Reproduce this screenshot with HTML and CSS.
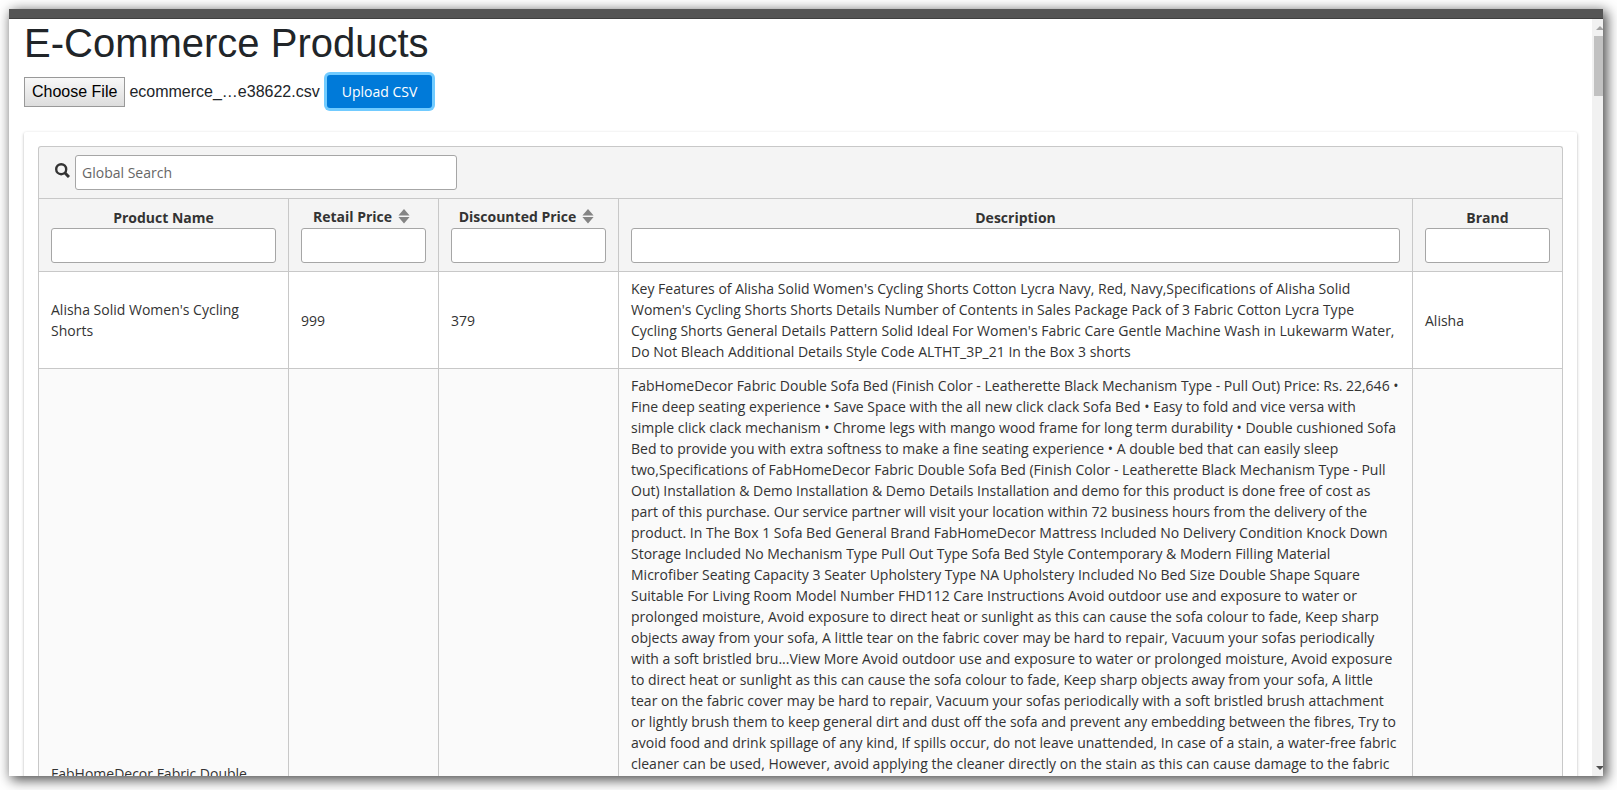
FILE: index.html
```html
<!DOCTYPE html>
<html lang="en">
<head>
<meta charset="utf-8">
<title>E-Commerce Products</title>
<link rel="stylesheet" href="styles.css">
</head>
<body>
<div class="window">
  <div class="topbar"></div>
  <div class="viewport">
    <main class="page">
      <h1 class="title">E-Commerce Products</h1>
      <form class="upload">
        <input class="file-input" type="file" id="csv" accept=".csv">
        <label class="file-button" for="csv">Choose File</label>
        <span class="file-name">ecommerce_…e38622.csv</span>
        <button class="upload-button" type="button">Upload CSV</button>
      </form>
      <section class="card">
        <div class="search">
          <label class="search-icon" for="global" aria-label="Global Search">
            <svg width="15" height="15" viewBox="0 0 15 15" fill="none" stroke="#333" stroke-width="2.4"><circle cx="6.2" cy="6.2" r="5"/><path d="M9.8 9.8L14 14" stroke-width="3"/></svg>
          </label>
          <input class="field search-field" id="global" type="text" placeholder="Global Search">
        </div>
        <table class="table">
          <colgroup><col class="col-name"><col class="col-retail"><col class="col-discount"><col><col class="col-brand"></colgroup>
          <thead>
            <tr>
              <th><label class="head" for="f-name">Product Name</label><input class="field" id="f-name" type="text"></th>
              <th><label class="head head-sort" for="f-retail">Retail Price<svg width="12" height="15" viewBox="0 0 12 15" fill="#848484"><path d="M6 0l5.6 6.6H.4zM6 14.6L.4 8h11.2z"/></svg></label><input class="field" id="f-retail" type="text"></th>
              <th><label class="head head-sort" for="f-disc">Discounted Price<svg width="12" height="15" viewBox="0 0 12 15" fill="#848484"><path d="M6 0l5.6 6.6H.4zM6 14.6L.4 8h11.2z"/></svg></label><input class="field" id="f-disc" type="text"></th>
              <th><label class="head" for="f-desc">Description</label><input class="field" id="f-desc" type="text"></th>
              <th><label class="head" for="f-brand">Brand</label><input class="field" id="f-brand" type="text"></th>
            </tr>
          </thead>
          <tbody>
            <tr>
              <td>Alisha Solid Women's Cycling Shorts</td>
              <td>999</td>
              <td>379</td>
              <td>Key Features of Alisha Solid Women's Cycling Shorts Cotton Lycra Navy, Red, Navy,Specifications of Alisha Solid Women's Cycling Shorts Shorts Details Number of Contents in Sales Package Pack of 3 Fabric Cotton Lycra Type Cycling Shorts General Details Pattern Solid Ideal For Women's Fabric Care Gentle Machine Wash in Lukewarm Water, Do Not Bleach Additional Details Style Code ALTHT_3P_21 In the Box 3 shorts</td>
              <td>Alisha</td>
            </tr>
            <tr class="long">
              <td>FabHomeDecor Fabric Double Sofa Bed</td>
              <td></td>
              <td></td>
              <td class="description">FabHomeDecor Fabric Double Sofa Bed (Finish Color - Leatherette Black Mechanism Type - Pull Out) Price: Rs. 22,646 • Fine deep seating experience • Save Space with the all new click clack Sofa Bed • Easy to fold and vice versa with simple click clack mechanism • Chrome legs with mango wood frame for long term durability • Double cushioned Sofa Bed to provide you with extra softness to make a fine seating experience • A double bed that can easily sleep two,Specifications of FabHomeDecor Fabric Double Sofa Bed (Finish Color - Leatherette Black Mechanism Type - Pull Out) Installation &amp; Demo Installation &amp; Demo Details Installation and demo for this product is done free of cost as part of this purchase. Our service partner will visit your location within 72 business hours from the delivery of the product. In The Box 1 Sofa Bed General Brand FabHomeDecor Mattress Included No Delivery Condition Knock Down Storage Included No Mechanism Type Pull Out Type Sofa Bed Style Contemporary &amp; Modern Filling Material Microfiber Seating Capacity 3 Seater Upholstery Type NA Upholstery Included No Bed Size Double Shape Square Suitable For Living Room Model Number FHD112 Care Instructions Avoid outdoor use and exposure to water or prolonged moisture, Avoid exposure to direct heat or sunlight as this can cause the sofa colour to fade, Keep sharp objects away from your sofa, A little tear on the fabric cover may be hard to repair, Vacuum your sofas periodically with a soft bristled bru...View More Avoid outdoor use and exposure to water or prolonged moisture, Avoid exposure to direct heat or sunlight as this can cause the sofa colour to fade, Keep sharp objects away from your sofa, A little tear on the fabric cover may be hard to repair, Vacuum your sofas periodically with a soft bristled brush attachment or lightly brush them to keep general dirt and dust off the sofa and prevent any embedding between the fibres, Try to avoid food and drink spillage of any kind, If spills occur, do not leave unattended, In case of a stain, a water-free fabric cleaner can be used, However, avoid applying the cleaner directly on the stain as this can cause damage to the fabric</td>
              <td></td>
            </tr>
          </tbody>
        </table>
      </section>
    </main>
    <div class="scrollbar" aria-hidden="true">
      <svg class="arrow" width="7" height="4" viewBox="0 0 7 4"><path d="M0 4L4 0l3 3v1z" fill="#a3a3a3"/></svg>
      <div class="thumb"></div>
      <svg class="arrow arrow-down" width="7" height="4" viewBox="0 0 7 4"><path d="M0 0h7v1L4 4z" fill="#505050"/></svg>
    </div>
  </div>
</div>
</body>
</html>
```
FILE: styles.css
```css
* { box-sizing: border-box; }

body {
  margin: 0;
  padding: 9px 14px 14px 9px;
  height: 100vh;
  overflow: hidden;
  background: #fff;
  color: #333;
  font: 14px/21px "Open Sans", "Noto Sans", sans-serif;
}

.window {
  display: flex;
  flex-direction: column;
  height: 100%;
  background: #fff;
  box-shadow: 3px 3px 12px 1px rgba(0, 0, 0, 0.7);
}

.topbar {
  flex: none;
  height: 10px;
  background: #555;
  border-bottom: 1px solid #404040;
}

.viewport {
  display: flex;
  flex: 1;
  min-height: 0;
  overflow: hidden;
}

.page {
  flex: 1;
  min-width: 0;
  padding: 0 15px;
}

.title {
  margin: 0 0 8px;
  color: #212529;
  font: 400 40px/48px "Liberation Sans", Arial, sans-serif;
}

.upload {
  display: flex;
  align-items: center;
  height: 33px;
  margin-bottom: 24px;
  color: #212529;
  font: 16px/24px "Liberation Sans", Arial, sans-serif;
}

.file-input {
  position: absolute;
  width: 1px;
  height: 1px;
  opacity: 0;
}

.file-button {
  height: 30px;
  padding: 2px 7px;
  border: 1px solid #999;
  background: linear-gradient(#f8f8f8, #ddd);
  color: #000;
}

.file-name { margin: 0 7px 0 4px; }

.upload-button {
  height: 33px;
  padding: 0 15px;
  border: 0;
  border-radius: 3px;
  background: #007ad9;
  box-shadow: 0 0 0 3px #71cbff;
  color: #fff;
  font: 14px/21px "Open Sans", "Noto Sans", sans-serif;
}

.card {
  padding: 14px;
  border-radius: 2px;
  box-shadow: 0 1px 3px rgba(0, 0, 0, 0.3);
}

.search {
  display: flex;
  align-items: center;
  gap: 5px;
  padding: 8px 16px;
  border: 1px solid #c8c8c8;
  border-bottom: 0;
  border-radius: 3px 3px 0 0;
  background: #f4f4f4;
}

.search-icon {
  display: flex;
  padding-bottom: 4px;
}

.field {
  display: block;
  width: 100%;
  height: 35px;
  padding: 6px;
  border: 1px solid #a6a6a6;
  border-radius: 3px;
  background: #fff;
  color: #333;
  font: inherit;
  font-weight: 400;
}

.field::placeholder { color: #666; }

.search-field { width: 382px; }

.table {
  width: 100%;
  table-layout: fixed;
  border-collapse: collapse;
}

.col-name { width: 250px; }
.col-retail, .col-brand { width: 150px; }
.col-discount { width: 180px; }

.table th, .table td { border: 1px solid #c8c8c8; }

.table th {
  padding: 7px 12px 8px;
  background: #f4f4f4;
  font-weight: 700;
}

.head {
  display: flex;
  align-items: center;
  justify-content: center;
  gap: 6px;
}

.head-sort { height: 22px; padding: 0 4px 2px 0; }

.table td {
  padding: 6px 12px;
  vertical-align: middle;
}

.long { height: 830px; background: #fafafa; }

.table .description { vertical-align: top; }

.scrollbar {
  display: flex;
  flex: none;
  flex-direction: column;
  align-items: flex-end;
  width: 11px;
  padding: 7px 0 6px;
  background: #f1f1f1;
}

.thumb {
  width: 9px;
  height: 60px;
  margin-top: 6px;
  background: #c1c1c1;
}

.arrow-down { margin-top: auto; }
```
